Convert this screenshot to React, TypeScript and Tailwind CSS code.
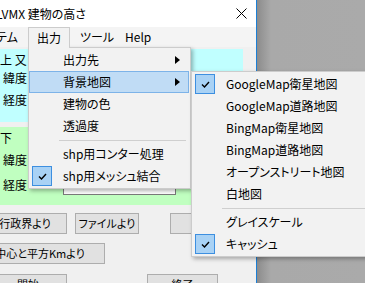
import { Fragment } from 'react';

const font = "font-['Noto_Sans_CJK_JP','Noto_Sans',sans-serif] [font-feature-settings:'palt']";

const outputMenu = [
    { label: '出力先', arrow: true },
    { label: '背景地図', arrow: true, active: true },
    { label: '建物の色' },
    { label: '透過度' },
    { separator: true },
    { label: 'shp用コンター処理' },
    { label: 'shp用メッシュ結合', checked: true },
];

const mapMenu = [
    { label: 'GoogleMap衛星地図', checked: true },
    { label: 'GoogleMap道路地図' },
    { label: 'BingMap衛星地図' },
    { label: 'BingMap道路地図' },
    { label: 'オープンストリート地図' },
    { label: '白地図' },
    { separator: true },
    { label: 'グレイスケール' },
    { label: 'キャッシュ', checked: true },
];

type Item = { label?: string; arrow?: boolean; active?: boolean; checked?: boolean; separator?: boolean };

function Check() {
    return (
        <div className="ml-[2px] flex h-[20px] w-[20px] items-center justify-center border border-[#3d8fe0] bg-[#a9d2f5]">
            <svg width="9" height="7" viewBox="0 0 9 7">
                <path d="M1 3.5 L3.5 6 L8 1" fill="none" stroke="#000" strokeWidth="1.4" />
            </svg>
        </div>
    );
}

function MenuItems({ items }: { items: Item[] }) {
    return (
        <>
            {items.map((item, i) =>
                item.separator ? (
                    <div key={i} className="flex h-[6px] items-center">
                        <div className="ml-[30px] mr-[3px] h-px flex-1 bg-[#cfcfcf]" />
                    </div>
                ) : (
                    <div
                        key={i}
                        className={`flex h-[22px] items-center ${item.active ? 'border border-[#7db3e8] bg-[#c0dcf5]' : 'border border-transparent'}`}
                    >
                        <div className="flex w-[33px] shrink-0 items-center">{item.checked && <Check />}</div>
                        <span className="flex-1 whitespace-nowrap text-[12px] text-black">{item.label}</span>
                        {item.arrow && (
                            <svg width="5" height="8" viewBox="0 0 5 8" className="mr-[8px]">
                                <polygon points="0,0 5,4 0,8" fill="#000" />
                            </svg>
                        )}
                    </div>
                ),
            )}
        </>
    );
}

function Button({ label, className }: { label: string; className: string }) {
    return (
        <div className={`flex h-[21px] shrink-0 items-center justify-center border border-[#adadad] bg-[#e1e1e1] text-[11px] whitespace-nowrap text-black ${className}`}>
            {label}
        </div>
    );
}

function Field({ label, className = '' }: { label: string; className?: string }) {
    return (
        <div className={`flex h-[20px] items-center ${className}`}>
            <span className="w-[63px] shrink-0 pl-[3px] text-[12px]">{label}</span>
            <div className="h-[19px] w-[113px] border border-[#7a7a7a] bg-white" />
        </div>
    );
}

export default function App() {
    return (
        <div className={`relative flex h-[283px] w-[365px] overflow-hidden ${font}`}>
            <div className="flex w-[257px] shrink-0 flex-col overflow-hidden border-r border-[#1b7fd6] bg-[#f0f0f0]">
                <div className="flex h-[27px] shrink-0 items-center justify-between bg-white">
                    <span className="ml-[-4px] text-[12px] whitespace-nowrap text-black">LVMX 建物の高さ</span>
                    <svg width="11" height="11" viewBox="0 0 11 11" className="mr-[9px]">
                        <path d="M0.5 0.5 L10.5 10.5 M10.5 0.5 L0.5 10.5" stroke="#000" strokeWidth="1" />
                    </svg>
                </div>

                <div className="flex h-[20px] shrink-0 items-start bg-[#f4f4f4] text-[12px] text-black">
                    <span className="ml-[-4px] flex h-[20px] w-[21px] items-center whitespace-nowrap">テム</span>
                    <div className="relative z-[25] ml-[11px] flex h-[21px] w-[42px] items-center justify-center border border-b-0 border-[#cccccc] bg-[#f2f2f2]">
                        出力
                    </div>
                    <span className="ml-[10px] flex h-[20px] w-[45px] items-center whitespace-nowrap">ツール</span>
                    <span className="flex h-[20px] items-center">Help</span>
                </div>

                <div className="flex flex-col pt-[2px] text-black">
                    <div className="flex h-[73px] w-[243px] flex-col bg-[#c0ffff] pt-[3px]">
                        <span className="flex h-[16px] items-center text-[12px] whitespace-nowrap">上 又</span>
                        <Field label="緯度" />
                        <Field label="経度" className="mt-[2px]" />
                    </div>
                    <div className="mt-[5px] flex h-[78px] w-[243px] flex-col bg-[#c0ffc0] pt-[3px]">
                        <span className="flex h-[16px] items-center text-[12px]">下</span>
                        <Field label="緯度" className="mt-[4px]" />
                        <Field label="経度" className="mt-[5px]" />
                    </div>

                    <div className="mt-[8px] flex">
                        <Button label="行政界より" className="ml-[-17px] w-[84px]" />
                        <Button label="ファイルより" className="ml-[8px] w-[64px]" />
                        <Button label="" className="ml-[31px] w-[64px]" />
                    </div>
                    <div className="mt-[9px] flex">
                        <Button label="中心と平方Kmより" className="ml-[-25px] w-[130px]" />
                    </div>
                    <div className="mt-[10px] flex">
                        <Button label="開始" className="ml-[-11px] w-[78px]" />
                        <Button label="終了" className="ml-[80px] w-[71px]" />
                    </div>
                </div>
            </div>

            <div className="flex-1 bg-[linear-gradient(to_right,#8c8c8c,#a9a9a9_14px,#aaaaaa)]" />

            <div className="absolute top-[47px] left-[28px] z-20 flex w-[163px] flex-col border border-[#cccccc] bg-[#f2f2f2] py-[1px] pr-[1px] shadow-[2px_2px_4px_rgba(0,0,0,0.3)]">
                <MenuItems items={outputMenu} />
            </div>

            <div className="absolute top-[71px] left-[191px] z-30 flex w-[200px] flex-col border border-[#cccccc] bg-[#f2f2f2] py-[1px] shadow-[2px_2px_4px_rgba(0,0,0,0.3)]">
                <MenuItems items={mapMenu} />
            </div>
        </div>
    );
}
